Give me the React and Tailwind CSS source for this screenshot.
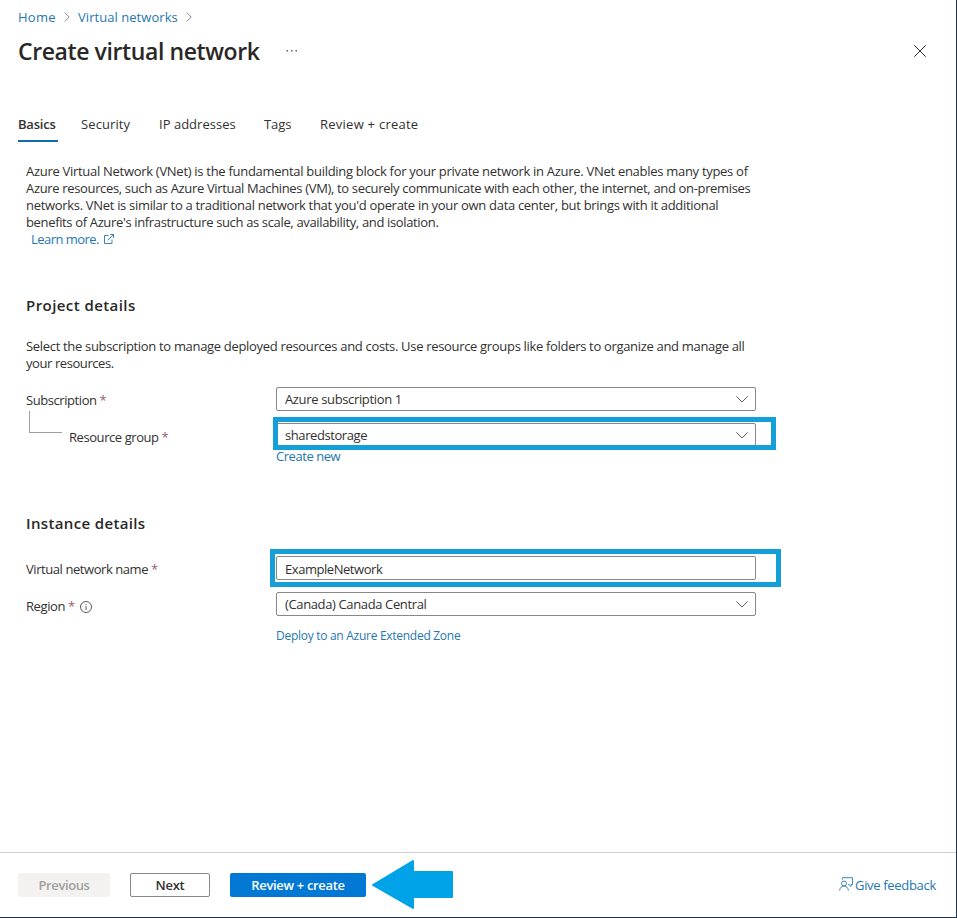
import React, { useState } from "react";

const TABS = [
  { name: "Basics", className: "w-10 tracking-[-0.2px]" },
  { name: "Security", className: "w-[50px] -ml-[5px] tracking-[0.1px]" },
  { name: "IP addresses", className: "w-[77px] tracking-[0.02px]" },
  { name: "Tags", className: "w-7 tracking-[-0.1px]" },
  { name: "Review + create", className: "w-[98px] tracking-[0.25px]" },
];

const ChevronRight = () => (
  <svg className="w-[6px] h-[10px]" viewBox="0 0 6 10" fill="none" stroke="#8a8886">
    <path d="M.7.5 5.2 5 .7 9.5" />
  </svg>
);

const ChevronDown = () => (
  <svg className="w-3 h-[7px] mr-[7px]" viewBox="0 0 12 7" fill="none" stroke="#605e5c">
    <path d="M.4.4 6 6 11.6.4" />
  </svg>
);

const Required = () => <span className="text-[#94606c]"> *</span>;

const Label = ({ className, children }) => (
  <div className={`flex items-center h-6 whitespace-nowrap ${className}`}>
    <span>{children}</span>
  </div>
);

const Field = ({ value, select, className, children }) => (
  <div className="relative w-[480px] h-6 shrink-0">
    <div className="flex items-center justify-between h-6 pl-2 border border-[#8a8886] rounded-[2px] bg-white">
      <span className={`whitespace-nowrap ${className}`}>{value}</span>
      {select && <ChevronDown />}
    </div>
    {children}
  </div>
);

export default function App() {
  const [tab, setTab] = useState("Basics");

  return (
    <div className="w-[957px] h-[918px] flex flex-col bg-white border-r border-b border-[#1f3352] overflow-hidden font-['Open_Sans','Noto_Sans',sans-serif] text-[13px] leading-[17px] text-[#323130]">
      {/* Breadcrumb */}
      <nav className="flex items-center h-[34px] pl-[18px] text-[#2677b0] whitespace-nowrap">
        <a className="w-[38px] tracking-[0.25px]">Home</a>
        <span className="w-[22px] pl-2"><ChevronRight /></span>
        <a className="w-[100px] tracking-[0.05px]">Virtual networks</a>
        <span className="pl-2"><ChevronRight /></span>
      </nav>

      {/* Title */}
      <header className="flex items-center h-[34px] pl-[18px] pr-[30px]">
        <h1 className="w-[268px] text-[23px] leading-8 font-semibold tracking-[-0.4px] whitespace-nowrap text-[#292827]">Create virtual network</h1>
        <svg className="w-3 h-1" viewBox="0 0 12 4" fill="#605e5c">
          <rect x="0.5" y="1" width="1.5" height="1.5" />
          <rect x="5" y="1" width="1.5" height="1.5" />
          <rect x="9.5" y="1" width="1.5" height="1.5" />
        </svg>
        <svg className="w-3 h-3 ml-auto" viewBox="0 0 12 12" fill="none" stroke="#323130">
          <path d="M.3.3 11.7 11.7M11.7.3.3 11.7" />
        </svg>
      </header>

      {/* Tabs */}
      <div className="flex gap-7 mt-10 pl-[18px] h-[34px] whitespace-nowrap">
        {TABS.map((t) => (
          <button
            key={t.name}
            onClick={() => setTab(t.name)}
            className={`flex items-center h-[34px] border-b-2 ${t.className} ${
              tab === t.name ? "border-[#0f6cb0] font-semibold" : "border-transparent"
            }`}
          >
            {t.name}
          </button>
        ))}
      </div>

      <main className="flex-1 pl-[26px]">
        <div className="mt-[21px] whitespace-nowrap">
          <p className="tracking-[-0.29px]">Azure Virtual Network (VNet) is the fundamental building block for your private network in Azure. VNet enables many types of</p>
          <p className="tracking-[-0.34px]">Azure resources, such as Azure Virtual Machines (VM), to securely communicate with each other, the internet, and on-premises</p>
          <p className="tracking-[-0.31px]">networks. VNet is similar to a traditional network that you'd operate in your own data center, but brings with it additional</p>
          <p className="tracking-[-0.35px]">benefits of Azure's infrastructure such as scale, availability, and isolation.</p>
          <a className="flex items-center pl-[5px] text-[#2677b0]">
            <span className="w-[73px] tracking-[-0.55px]">Learn more.</span>
            <svg className="w-[10px] h-[10px] mb-[1px]" viewBox="0 0 10 10" fill="none" stroke="#2677b0" strokeWidth="0.9">
              <path d="M4.5 1.5H.5v8h7.5V5.5M6 .5h3.5V4M9.5.5 3.8 6.2" />
            </svg>
          </a>
        </div>

        <h2 className="mt-12 h-[18px] flex items-center text-[15px] leading-[18px] font-semibold tracking-[0.43px] whitespace-nowrap text-[#292827]">Project details</h2>
        <div className="mt-6 whitespace-nowrap">
          <p className="tracking-[-0.32px]">Select the subscription to manage deployed resources and costs. Use resource groups like folders to organize and manage all</p>
          <p className="tracking-[-0.42px]">your resources.</p>
        </div>

        <div className="flex mt-[15px]">
          <div className="w-[250px]">
            <Label className="pt-[2px] tracking-[-0.43px]">Subscription<Required /></Label>
            <div className="flex">
              <div className="w-[33px] h-[22px] ml-[3px] border-l border-b border-[#a19f9d]" />
              <Label className="mt-[14px] ml-[7px] tracking-[-0.43px]">Resource group<Required /></Label>
            </div>
          </div>
          <div className="flex flex-col gap-3">
            <Field value="Azure subscription 1" select className="tracking-[-0.35px]" />
            <Field value="sharedstorage" select className="tracking-[-0.42px]">
              <div className="absolute -left-[3px] -top-[6px] w-[503px] h-[33px] border-[5px] border-[#149fd8]" />
            </Field>
            <a className="-mt-[11px] text-[#2677b0] tracking-[-0.45px]">Create new</a>
          </div>
        </div>

        <h2 className="mt-[49px] h-[18px] flex items-center text-[15px] leading-[18px] font-semibold tracking-[0.35px] whitespace-nowrap text-[#292827]">Instance details</h2>
        <div className="flex mt-6">
          <div className="w-[250px] flex flex-col gap-[13px] pt-[1px]">
            <Label className="tracking-[-0.43px]">Virtual network name<Required /></Label>
            <Label className="tracking-[-0.4px]">
              <span className="flex items-center gap-[5px]">
                <span>Region<Required /></span>
                <svg className="w-3 h-3 mt-[1px]" viewBox="0 0 12 12" fill="none" stroke="#323130" strokeWidth="0.8">
                  <circle cx="6" cy="6" r="5.5" />
                  <path d="M6 5v4M6 3v1" />
                </svg>
              </span>
            </Label>
          </div>
          <div className="flex flex-col gap-3">
            <Field value="ExampleNetwork" className="pt-[2px] tracking-[-0.45px]">
              <div className="absolute -left-[6px] -top-[7px] w-[511px] h-[38px] border-[5px] border-[#149fd8]" />
            </Field>
            <Field value="(Canada) Canada Central" select className="tracking-[-0.37px]" />
            <a className="-mt-[1px] text-xs leading-[17px] text-[#2677b0] tracking-[-0.28px]">Deploy to an Azure Extended Zone</a>
          </div>
        </div>
      </main>

      {/* Wizard actions */}
      <footer className="flex items-center h-[65px] pl-[18px] pr-5 border-t border-[#d2d0ce] whitespace-nowrap">
        <button disabled className="w-[92px] h-6 rounded-[2px] bg-[#f3f2f1] font-semibold text-[#a19f9d] tracking-[-0.4px]">Previous</button>
        <button className="w-20 h-6 ml-5 rounded-[2px] border border-[#8a8886] font-semibold tracking-[-0.3px]">Next</button>
        <button className="w-[136px] h-6 ml-5 rounded-[2px] bg-[#0078d4] font-semibold text-white tracking-[-0.33px]">Review + create</button>
        <svg className="w-[81px] h-[50px] ml-[6px]" viewBox="0 0 81 50" fill="#00a2e8" stroke="#00a2e8" strokeLinejoin="round" strokeWidth="2">
          <path d="M1 25 41 1v11h39v25H41v11Z" />
        </svg>
        <a className="flex items-center ml-auto text-[#2677b0]">
          <svg className="w-[14px] h-[14px] mr-[2px] mb-[2px]" viewBox="0 0 14 14" fill="none" stroke="#2677b0" strokeWidth="0.9">
            <circle cx="5" cy="6.500" r="2.500" />
            <path d="M.6 13.500C.9 10.800 2.600 9 5 9s4.100 1.800 4.400 4.500M3.500 2.500V.7h10v6.800H12v2L9.800 7.500H9" />
          </svg>
          <span className="w-[81px] tracking-[-0.32px]">Give feedback</span>
        </a>
      </footer>
    </div>
  );
}
